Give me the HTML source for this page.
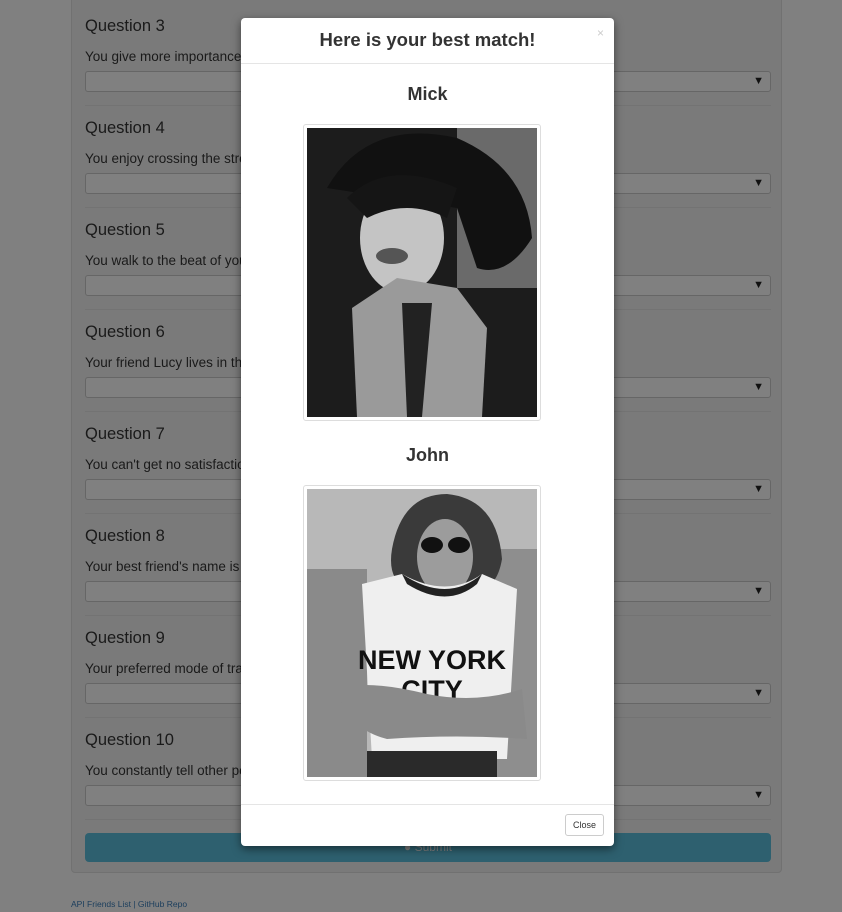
<!DOCTYPE html>
<html><head><meta charset="utf-8"><style>
*{box-sizing:border-box;margin:0;padding:0}
body{width:842px;height:912px;overflow:hidden;background:#808080;font-family:"Liberation Sans",Arial,sans-serif;color:#1a1a1a;position:relative}
.panel{position:absolute;left:71px;top:-20px;width:711px;height:893px;background:#7a7a7a;border:1px solid #717171;border-radius:4px}
.q{position:absolute;left:13px;width:686px}
.q h3{font-size:16.5px;font-weight:normal;line-height:20px}
.q p{font-size:13.5px;margin-top:12px;line-height:18px}
.q .sel{margin-top:5px;height:21px;border:1px solid #666;border-radius:3px;background:#808080;position:relative}
.q .sel:after{content:"▼";position:absolute;right:6px;top:3px;font-size:11px;color:#111}
.q hr{border:0;border-top:1px solid #737373;margin-top:13px}
.submit{position:absolute;left:13px;top:852px;width:686px;height:29px;background:#2e606f;border-radius:4px;color:#7f7f7f;text-align:center;font-size:12px;line-height:29px}
.foot{position:absolute;left:71px;top:899px;font-size:8.5px;color:#1a3d5c}
.modal{position:absolute;left:241px;top:18px;width:373px;height:828px;background:#fff;border-radius:4px;box-shadow:0 3px 9px rgba(0,0,0,.5);color:#333}
.mh{height:46px;border-bottom:1px solid #e5e5e5;text-align:center;font-weight:bold;font-size:18.5px;line-height:44px}
.x{position:absolute;right:10px;top:8px;color:#ccc;font-size:12px}
.name{position:absolute;width:100%;text-align:center;font-weight:bold;font-size:18px}
.th{position:absolute;left:62px;width:238px;border:1px solid #ddd;border-radius:3px;padding:3px;background:#fff}
.th svg{display:block}
.mf{position:absolute;top:786px;left:0;right:0;border-top:1px solid #e5e5e5}
.btn{position:absolute;right:10px;top:796px;width:39px;height:22px;border:1px solid #ccc;border-radius:3px;font-size:9px;text-align:center;line-height:20px;color:#333}
</style></head><body>
<div class="panel">
<div class="q" style="top:35px"><h3>Question 3</h3><p>You give more importance to your gut than to your brain.</p><div class="sel"></div><hr></div>
<div class="q" style="top:137px"><h3>Question 4</h3><p>You enjoy crossing the street.</p><div class="sel"></div><hr></div>
<div class="q" style="top:239px"><h3>Question 5</h3><p>You walk to the beat of your own drum.</p><div class="sel"></div><hr></div>
<div class="q" style="top:341px"><h3>Question 6</h3><p>Your friend Lucy lives in the sky with diamonds.</p><div class="sel"></div><hr></div>
<div class="q" style="top:443px"><h3>Question 7</h3><p>You can't get no satisfaction.</p><div class="sel"></div><hr></div>
<div class="q" style="top:545px"><h3>Question 8</h3><p>Your best friend's name is Jude.</p><div class="sel"></div><hr></div>
<div class="q" style="top:647px"><h3>Question 9</h3><p>Your preferred mode of transport is a yellow submarine.</p><div class="sel"></div><hr></div>
<div class="q" style="top:749px"><h3>Question 10</h3><p>You constantly tell other people to get back.</p><div class="sel"></div><hr></div>
<div class="submit">● Submit</div>
</div>
<div class="foot">API Friends List | GitHub Repo</div>
<div class="modal">
<div class="mh">Here is your best match!</div><div class="x">×</div>
<div class="name" style="top:66px">Mick</div>
<div class="th" style="top:106px"><svg width="230" height="289" viewBox="0 0 230 289">
<rect width="230" height="289" fill="#1c1c1c"/>
<rect x="150" y="0" width="80" height="160" fill="#6a6a6a"/>
<path d="M20 60 Q60 -10 150 10 Q220 40 225 110 Q200 150 170 140 L150 80 Z" fill="#111"/>
<ellipse cx="95" cy="110" rx="42" ry="55" fill="#c4c4c4"/>
<path d="M40 70 Q80 30 150 60 L140 90 Q100 70 60 90 Z" fill="#151515"/>
<ellipse cx="85" cy="128" rx="16" ry="8" fill="#555"/>
<path d="M45 180 L90 150 L150 160 L180 200 L175 289 L50 289 Z" fill="#9a9a9a"/>
<path d="M95 175 L125 175 L115 289 L100 289 Z" fill="#222"/>
</svg></div>
<div class="name" style="top:427px">John</div>
<div class="th" style="top:467px"><svg width="230" height="288" viewBox="0 0 230 288">
<rect width="230" height="288" fill="#b8b8b8"/>
<rect x="0" y="80" width="60" height="208" fill="#8a8a8a"/>
<rect x="180" y="60" width="50" height="228" fill="#8e8e8e"/>
<path d="M85 60 Q95 5 140 5 Q190 10 195 70 Q190 100 170 100 L100 100 Q80 90 85 60Z" fill="#3a3a3a"/>
<ellipse cx="138" cy="68" rx="28" ry="38" fill="#9c9c9c"/>
<ellipse cx="125" cy="56" rx="11" ry="8" fill="#111"/><ellipse cx="152" cy="56" rx="11" ry="8" fill="#111"/>
<path d="M55 95 L95 85 Q140 110 175 85 L210 100 L200 270 L65 270 Z" fill="#efefef"/>
<path d="M95 85 Q140 115 175 85 L170 95 Q140 120 100 95Z" fill="#222"/>
<text x="125" y="180" text-anchor="middle" font-family="Liberation Sans,sans-serif" font-weight="bold" font-size="27" fill="#111">NEW YORK</text>
<text x="125" y="210" text-anchor="middle" font-family="Liberation Sans,sans-serif" font-weight="bold" font-size="27" fill="#111">CITY</text>
<path d="M30 200 Q60 190 120 205 Q170 215 215 200 L220 250 Q150 245 80 250 Q40 240 30 200Z" fill="#8a8a8a"/>
<rect x="60" y="262" width="130" height="26" fill="#2a2a2a"/>
</svg></div>
<div class="mf"></div>
<div class="btn">Close</div>
</div>
</body></html>
